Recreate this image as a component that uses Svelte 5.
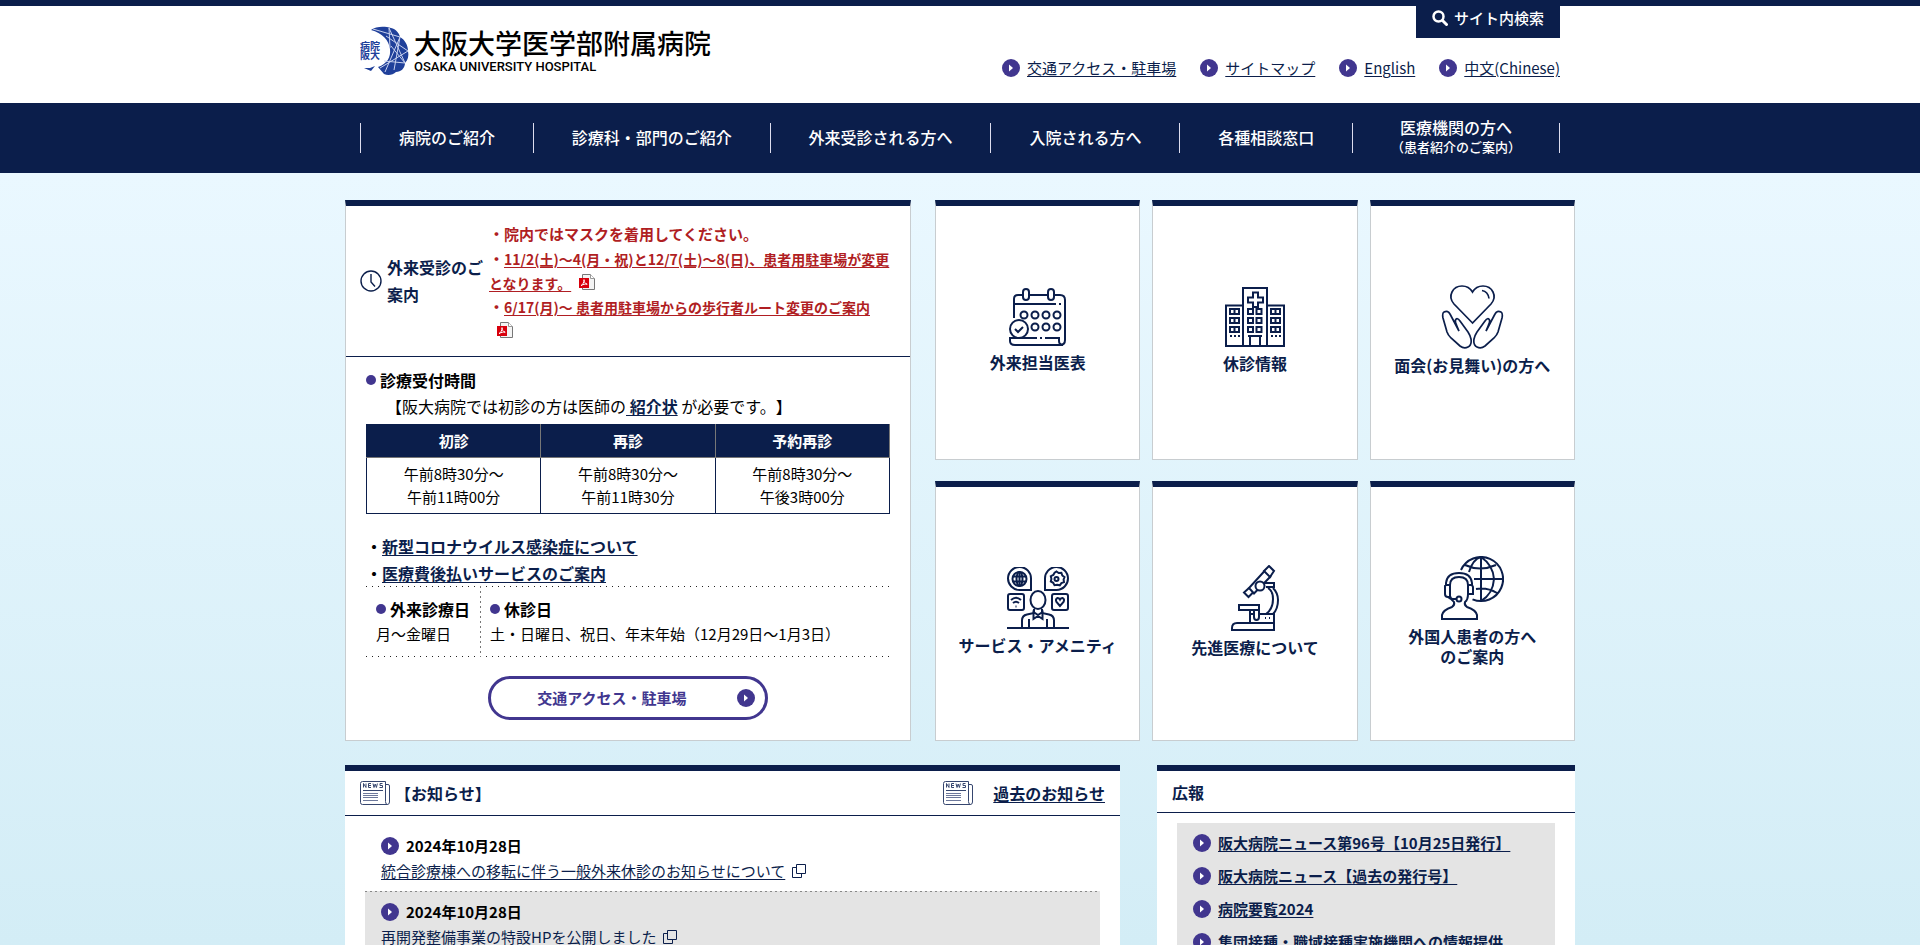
<script>
  const headerLinks = ['交通アクセス・駐車場', 'サイトマップ', 'English', '中文(Chinese)'];

  const navItems = [
    { label: '病院のご紹介' },
    { label: '診療科・部門のご紹介' },
    { label: '外来受診される方へ' },
    { label: '入院される方へ' },
    { label: '各種相談窓口' },
    { label: '医療機関の方へ', sub: '（患者紹介のご案内）' }
  ];

  const hours = [
    { type: '初診', from: '午前8時30分～', to: '午前11時00分' },
    { type: '再診', from: '午前8時30分～', to: '午前11時30分' },
    { type: '予約再診', from: '午前8時30分～', to: '午後3時00分' }
  ];

  const guideLinks = ['新型コロナウイルス感染症について', '医療費後払いサービスのご案内'];

  const tiles = [
    { icon: 'calendar', lines: ['外来担当医表'] },
    { icon: 'building', lines: ['休診情報'] },
    { icon: 'care', lines: ['面会(お見舞い)の方へ'] },
    { icon: 'service', lines: ['サービス・アメニティ'] },
    { icon: 'microscope', lines: ['先進医療について'] },
    { icon: 'global', lines: ['外国人患者の方へ', 'のご案内'] }
  ];

  const news = [
    { date: '2024年10月28日', title: '統合診療棟への移転に伴う一般外来休診のお知らせについて' },
    { date: '2024年10月28日', title: '再開発整備事業の特設HPを公開しました' }
  ];

  const publications = [
    '阪大病院ニュース第96号【10月25日発行】',
    '阪大病院ニュース【過去の発行号】',
    '病院要覧2024',
    '集団接種・職域接種実施機関への情報提供'
  ];

  const colsA = [15, 26, 37, 48];
</script>

{#snippet arrow()}
  <svg class="arrow" viewBox="0 0 18 18" width="18" height="18" aria-hidden="true">
    <circle cx="9" cy="9" r="9" fill="#41368f" />
    <path d="M7 5.6 11 9 7 12.4z" fill="#fff" />
  </svg>
{/snippet}

{#snippet pdf()}
  <svg class="pdf" viewBox="0 0 16 16" width="16" height="16" aria-hidden="true">
    <path d="M3.5.5h8l4 4v11h-12z" fill="#f4f4f4" stroke="#777" />
    <path d="M11.5.5v4h4" fill="#fff" stroke="#999" />
    <rect x="0" y="4" width="10" height="10" fill="#d8000c" />
    <path d="M2 11.6c2-1 3-3.400 3-6 .2 2.600 1 4 3.200 4.600-2-.4-4 .2-6.200 1.400z" fill="none" stroke="#fff" stroke-width="1" />
  </svg>
{/snippet}

{#snippet newsIcon()}
  <svg class="paper" viewBox="0 0 30 24" width="30" height="24" aria-hidden="true" fill="none" stroke="#36466f">
    <path d="M25.500 3.500h2.500q1.500 0 1.500 1.500v16q0 2.500-2.200 2.500H2.500q-2 0-2-2V2.500q0-2 2-2h23v20q0 3 2 3" />
    <path d="M3.500 6.500V2.500l2.500 4V2.500M11 2.500H8.500v4H11M8.500 4.500H11M13 2.500l1 4 1.200-3.500 1.200 3.500 1-4M22.500 2.500h-2.500v2h2.500v2h-3" />
    <path d="M3 9.500h20" />
    <path d="M3 12.500h15M3 14.500h15M3 16.500h15M3 19.500h15" stroke="#6d789b" />
  </svg>
{/snippet}

{#snippet tileIcon(name)}
  {#if name === 'calendar'}
    <svg class="pic" viewBox="0 0 58 58" width="58" height="58" aria-hidden="true">
      <path d="M5 30V11q0-4 4-4h5M20 7h19M45 7h6q5 0 5 5v40q0 5-5 5H6q-5 0-5-4v-3h27M36 50h14v3q0 4 4 4" />
      <rect x="14" y="1" width="6" height="11" rx="3" /><rect x="39" y="1" width="6" height="11" rx="3" />
      <path d="M5 16h42M50 16h2M31 50h2" />
      {#each colsA as x}<circle cx={x} cy="27" r="3.500" />{/each}
      {#each colsA.slice(1) as x}<circle cx={x} cy="39" r="3.500" />{/each}
      <circle cx="10" cy="41" r="9" fill="#fff" /><path d="m6 41 3 3 5-5" />
    </svg>
  {:else if name === 'building'}
    <svg class="pic" viewBox="0 0 60 60" width="60" height="60" aria-hidden="true">
      <path d="M1 18.500h17V59H1zM42 18.500h17V59H42zM18 1h24v58H18z" />
      <path d="M28 5.500h5v5h5v5h-5v4.500h-5v-4.500h-5v-5h5z" />
      {#each [23, 31.500] as x}{#each [22, 31, 40] as y}<rect {x} {y} width="5" height="5" />{/each}{/each}
      {#each [5, 46] as x}{#each [22, 31, 40] as y}<path d="M{x} {y}h9v5h-9zM{x + 4.500} {y}v5" />{/each}
        <path d="M{x} 49h2m2 0h2m2 0h2" />{/each}
      <path d="M23 49h14M25 49v10M35 49v10" />
    </svg>
  {:else if name === 'care'}
    <svg class="pic fine" viewBox="0 0 63 64" width="63" height="64" aria-hidden="true">
      <path d="M31.500 38 13 19C6 11 12 1 21 1q7 0 10.500 6Q35 1 42 1c9 0 15 10 8 18z" />
      <path d="M41 5.500q6 1 7 8" />
      {#each [1, -1] as s}
        <g transform={s < 0 ? 'translate(63 0) scale(-1 1)' : undefined}>
          <path d="M18 46 9 29Q7 25 3 27q-2 1-1 6l4 14q1 3 4 6l9 8q4 3 8 1t3-8q-1-4-3-7l-8-11q-3-4-4.500-1-.500 2 1 5z" />
        </g>
      {/each}
    </svg>
  {:else if name === 'service'}
    <svg class="pic" viewBox="0 0 62 62" width="62" height="62" aria-hidden="true">
      <path d="M24 23V12a11.500 11.500 0 1 0-11.500 11zM38 23V12a11.500 11.500 0 1 1 11.500 11z" />
      <circle cx="12.500" cy="12" r="7" /><ellipse cx="12.500" cy="12" rx="3" ry="7" />
      <path d="M6 9.500h13M6 14.500h13M12.500 5v14" />
      <path d="m49.500 4.500 2.200 1.600 2.700-.2.900 2.600 2.200 1.600-.9 2.400.4 2.700-2.600.9-1.600 2.200-2.600-.6-2.700.500-1.300-2.400-2.400-1.300.6-2.600-.6-2.700 2.500-1.200 1.300-2.300z" />
      <circle cx="49.500" cy="12" r="2" />
      <rect x="1" y="27" width="16" height="16" rx="2" /><rect x="45" y="27" width="16" height="16" rx="2" />
      <path d="M4 33q5-4.500 10 0M6 36q3-2.500 6 0M8.500 39.500h1" />
      <path d="m53 39-3.500-4q-1.500-3 1-4 1.700 0 2.500 1.600Q53.800 31 55.500 31q2.500 1 1 4z" />
      <ellipse cx="31" cy="33" rx="7.500" ry="9" />
      <path d="M27 42v4l-7 1.500q-5 1-5 6V61M35 42v4l7 1.500q5 1 5 6V61M22 52v9M40 52v9M0 61h62" />
      <path d="m26.500 45 4.500 3 4.500-3v7L31 49l-4.500 3z" />
    </svg>
  {:else if name === 'microscope'}
    <svg class="pic" viewBox="0 0 48 66" width="48" height="66" aria-hidden="true">
      <path d="M34 5.500 18 23l5 5.500L40 11" />
      <path d="m38 1 5 5-4 6-6-6zM18 23l-5 4.500 4.500 4.500L22 27.500" />
      <circle cx="29" cy="21" r="4.500" fill="#fff" />
      <path d="M33 18h10v4h-8M37 23q5 3 5 11 0 10-7 15M42 23q5 5 5 12 0 9-5 14" />
      <path d="M8 40h20v5H8zM19 45v13M23 45v7q0 3 2.500 3t2.500-3v-7M28 49h15v16H1v-2q0-5 5-5h37M34 53h1M38 53h1M19 49h4" />
    </svg>
  {:else}
    <svg class="pic" viewBox="0 0 63 64" width="63" height="64" aria-hidden="true">
      <path d="M20 14A22 22 0 1 1 31.500 43.300M40 1v44M28 16Q32 3 40 1q12 8 13 22-1 15-13 22M24 9q15 7 31 0M33 23h29M35 33q11-2 21 4" />
      <path d="M5 29V27Q6 17 18 17t13 10v2M9 29q0-8 9-8t9 8M5 29h4v12H7q-3 0-3-3v-8zM31 29h-4v9h5v-7zM7 41q2 2 5 2h3" />
      <circle cx="18" cy="43" r="2.500" />
      <path d="M9 40q1 4 4 6 1 3-2 5-9 3-10 8v4h35v-4q-1-5-10-8-3-2-2-5 3-2 3-8" />
    </svg>
  {/if}
{/snippet}

<div class="page">
  <header>
    <div class="wrap head">
      <a class="logo" href="#top">
        <svg viewBox="0 0 50 50" width="50" height="50" aria-hidden="true">
          <path d="M11 4C16 0 25 0 31 2c5 1 8 5 9 9 5 3 8 8 8 14 1 5 0 9-3 12 0 5-4 9-9 9-3 3-8 4-12 2l-6-7c9-3 13-10 12-18C29 14 22 7 11 4zM4 42l6 0 5-2-4 5z" fill="#20409a" />
          <path d="M13 3 40 11M29 2 45 37M40 11 25 46M26 10 48 25M48 25 20 42M40 11 34 44M31 20 45 37 24 35M29 2 30 22" fill="none" stroke="#c9d2ef" stroke-width="1" />
          <text x="0" y="24" class="seal">病院</text>
          <text x="0" y="33" class="seal">阪大</text>
        </svg>
        <span class="names">
          <span class="jp">大阪大学医学部附属病院</span>
          <span class="en">OSAKA UNIVERSITY HOSPITAL</span>
        </span>
      </a>
      <div class="tools">
        <button class="search" type="button">
          <svg viewBox="0 0 16 16" width="16" height="16" aria-hidden="true" fill="none" stroke="#fff">
            <circle cx="6.500" cy="6.500" r="5" stroke-width="2.500" /><path d="m10.500 10.500 4 4" stroke-width="3" stroke-linecap="round" />
          </svg>
          サイト内検索
        </button>
        <ul class="quick">
          {#each headerLinks as label}
            <li>{@render arrow()}<a href="#top">{label}</a></li>
          {/each}
        </ul>
      </div>
    </div>
  </header>

  <nav>
    <ul class="wrap">
      {#each navItems as item}
        <li><a href="#top">{item.label}{#if item.sub}<small>{item.sub}</small>{/if}</a></li>
      {/each}
    </ul>
  </nav>

  <main>
    <div class="upper">
      <section class="guide">
        <div class="notice">
          <h2>
            <svg viewBox="0 0 22 22" width="22" height="22" aria-hidden="true" fill="none" stroke="#0b1e4b" stroke-width="1.400">
              <circle cx="11" cy="11" r="10" /><path d="M11 4v8l4 4.500" />
            </svg>
            <span>外来受診のご案内</span>
          </h2>
          <div class="alerts">
            <p class="lead">・院内ではマスクを着用してください。</p>
            <p>・<a href="#top">11/2(土)～4(月・祝)と12/7(土)～8(日)、患者用駐車場が変更となります。</a>{@render pdf()}</p>
            <p>・<a href="#top">6/17(月)～ 患者用駐車場からの歩行者ルート変更のご案内</a>{@render pdf()}</p>
          </div>
        </div>
        <div class="body">
          <h3>診療受付時間</h3>
          <p class="ref">【阪大病院では初診の方は医師の<a href="#top">&nbsp;紹介状</a> が必要です。】</p>
          <table>
            <thead><tr>{#each hours as h}<th>{h.type}</th>{/each}</tr></thead>
            <tbody><tr>{#each hours as h}<td>{h.from}<br />{h.to}</td>{/each}</tr></tbody>
          </table>
          <ul class="links">
            {#each guideLinks as label}<li>・<a href="#top">{label}</a></li>{/each}
          </ul>
          <div class="days">
            <div><h3>外来診療日</h3><p>月～金曜日</p></div>
            <div><h3>休診日</h3><p>土・日曜日、祝日、年末年始（12月29日～1月3日）</p></div>
          </div>
          <a class="access" href="#top"><span>交通アクセス・駐車場</span>{@render arrow()}</a>
        </div>
      </section>

      <div class="tiles">
        {#each tiles as tile}
          <a class="tile" href="#top">
            {@render tileIcon(tile.icon)}
            <span>{#each tile.lines as line, i}{#if i}<br />{/if}{line}{/each}</span>
          </a>
        {/each}
      </div>
    </div>

    <div class="lower">
      <section class="panel">
        <div class="panel-head news-head">
          <h2>{@render newsIcon()}【お知らせ】</h2>
          <div class="past">{@render newsIcon()}<a href="#top">過去のお知らせ</a></div>
        </div>
        <ul class="news">
          {#each news as item}
            <li>
              <div class="date">{@render arrow()}<time>{item.date}</time></div>
              <a href="#top">{item.title}</a>
              <svg class="ext" viewBox="0 0 14 14" width="14" height="14" aria-hidden="true" fill="none" stroke="#0b1e4b">
                <path d="M4.500.500h9v9h-9zM4.500 3.500h-4v10h9v-4" />
              </svg>
            </li>
          {/each}
        </ul>
      </section>

      <section class="panel">
        <div class="panel-head"><h2>広報</h2></div>
        <ul class="pubs">
          {#each publications as label}
            <li>{@render arrow()}<a href="#top">{label}</a></li>
          {/each}
        </ul>
      </section>
    </div>
  </main>
</div>

<style>
  :global(body) { margin: 0; }
  .page {
    --navy: #0b1e4b;
    --violet: #41368f;
    height: 100vh;
    overflow: hidden;
    font: 15px/25px "Noto Sans CJK JP", sans-serif;
    text-spacing-trim: space-all;
    color: #000;
    background: linear-gradient(#eaf8ff 173px, #d3edf6);
  }
  .page *, .page { box-sizing: border-box; }
  ul { list-style: none; margin: 0; padding: 0; }
  h2, h3, p { margin: 0; font-size: 16px; }
  a { color: var(--navy); text-underline-offset: 2px; }
  svg { flex: none; }
  .wrap { max-width: 1200px; margin: 0 auto; }

  header { background: #fff; border-top: 6px solid var(--navy); }
  .head { display: flex; justify-content: space-between; height: 97px; }
  .logo { display: flex; gap: 4px; padding-top: 20px; color: #000; text-decoration: none; }
  .seal { font: 700 10px "Noto Sans CJK JP", sans-serif; fill: #20409a; }
  .names { display: flex; flex-direction: column; }
  .jp { font-size: 27px; font-weight: 500; line-height: 34px; }
  .en { font: 500 13px/14px Roboto, sans-serif; }
  .tools { display: flex; flex-direction: column; align-items: flex-end; gap: 17px; }
  .search {
    display: flex; align-items: center; gap: 6px; height: 32px; padding: 0 16px 8px;
    border: 0; background: var(--navy); color: #fff; font: 500 15px/24px "Noto Sans CJK JP", sans-serif;
  }
  .quick { display: flex; gap: 24px; }
  .quick li { display: flex; align-items: center; gap: 7px; }

  nav { background: var(--navy); }
  nav ul { display: flex; align-items: center; height: 70px; }
  nav li { flex: 1 1 auto; display: flex; align-items: center; justify-content: center; height: 30px; border-left: 1px solid #dde; }
  nav li:last-child { border-right: 1px solid #dde; }
  nav a { padding-bottom: 2px; color: #fff; text-decoration: none; font-size: 16px; font-weight: 500; line-height: 19px; text-align: center; white-space: nowrap; }
  nav small { display: block; font-size: 13px; }

  main { max-width: 1230px; margin: 0 auto; padding-top: 27px; }
  .upper { display: grid; grid-template-columns: 566fr 640fr; gap: 24px; }
  .guide, .tile { background: #fff; border: 1px solid #c8cdd0; border-top: 6px solid var(--navy); }
  .notice { display: flex; align-items: center; height: 151px; padding: 0 14px; border-bottom: 1px solid var(--navy); }
  .notice h2 { display: flex; align-items: center; gap: 5px; width: 129px; flex: none; color: var(--navy); line-height: 27px; }
  .alerts, .alerts a { color: #b01e23; }
  .alerts p { font-size: 15px; font-weight: 700; line-height: 24px; }
  .alerts a { font-size: 14px; }
  .alerts .lead { line-height: 27px; }
  .pdf { margin: 0 8px; vertical-align: -1px; }
  .body { padding: 10px 20px 19px; }
  h3 { display: flex; align-items: center; gap: 4px; line-height: 26px; }
  h3::before { content: ""; width: 10px; height: 10px; border-radius: 50%; background: var(--violet); }
  .ref { padding-left: 20px; line-height: 26px; }
  .ref a { font-weight: 700; }
  table { width: 100%; margin-top: 5px; border-collapse: collapse; table-layout: fixed; text-align: center; }
  th { height: 33px; padding: 0; background: var(--navy); color: #fff; border: 1px solid #777; border-top-color: var(--navy); line-height: 24px; }
  th:first-child { border-left-color: var(--navy); }
  td { padding: 4px 0 5px; border: 1px solid var(--navy); line-height: 23px; }
  .links { margin-top: 19px; font-size: 16px; font-weight: 700; line-height: 27px; }
  .links li:last-child { line-height: 26px; }
  .days {
    display: flex; height: 71px;
    background:
      repeating-linear-gradient(90deg, #222 0 1px, transparent 1px 6px) top / 100% 1px no-repeat,
      repeating-linear-gradient(90deg, #222 0 1px, transparent 1px 6px) bottom / 100% 1px no-repeat;
  }
  .days div { padding: 10px 10px 0; }
  .days div + div { background: repeating-linear-gradient(#777 0 2px, transparent 2px 5px) left / 1px 100% no-repeat; }
  .days p { font-size: 15px; line-height: 24px; }
  .access {
    display: flex; align-items: center; width: 280px; height: 44px; margin: 19px auto 0; padding: 0 10px;
    border: 3px solid var(--violet); border-radius: 22px; color: var(--violet); font-weight: 700; text-decoration: none;
  }
  .access span { flex: 1; padding: 0 14px 2px 0; text-align: center; }

  .tiles { display: grid; grid-template-columns: repeat(3, 1fr); grid-auto-rows: 260px; gap: 21px 12px; }
  .tile { display: flex; flex-direction: column; align-items: center; justify-content: center; gap: 6px; padding-bottom: 6px; font-size: 16px; font-weight: 700; line-height: 20px; text-align: center; text-decoration: none; }
  .pic { fill: none; stroke: var(--navy); stroke-width: 2; }
  .fine { stroke-width: 1.700; }

  .lower { display: grid; grid-template-columns: 775fr 418fr; gap: 37px; margin-top: 24px; align-items: start; }
  .panel { background: #fff; border-top: 6px solid var(--navy); }
  .panel-head { display: flex; align-items: center; justify-content: space-between; height: 42px; padding: 2px 15px 0; border-bottom: 1px solid var(--navy); color: var(--navy); }
  .news-head { height: 45px; padding-top: 0; }
  .panel-head h2 { display: flex; align-items: center; gap: 5px; }
  .past { display: flex; align-items: center; gap: 20px; font-size: 16px; font-weight: 700; }
  .news { padding: 9px 20px; }
  .news li { padding: 8px 16px; }
  .news li + li { background: repeating-linear-gradient(90deg, #888 0 2px, transparent 2px 5px) top / 100% 1px no-repeat #e4e4e4; }
  .date { display: flex; align-items: center; gap: 7px; font-weight: 700; }
  .ext { margin-left: 3px; vertical-align: -1px; }
  .pubs { margin: 10px 20px 0; padding: 3px 16px; background: #e4e4e4; font-weight: 700; }
  .pubs li { display: flex; align-items: center; gap: 7px; height: 33px; }
</style>
